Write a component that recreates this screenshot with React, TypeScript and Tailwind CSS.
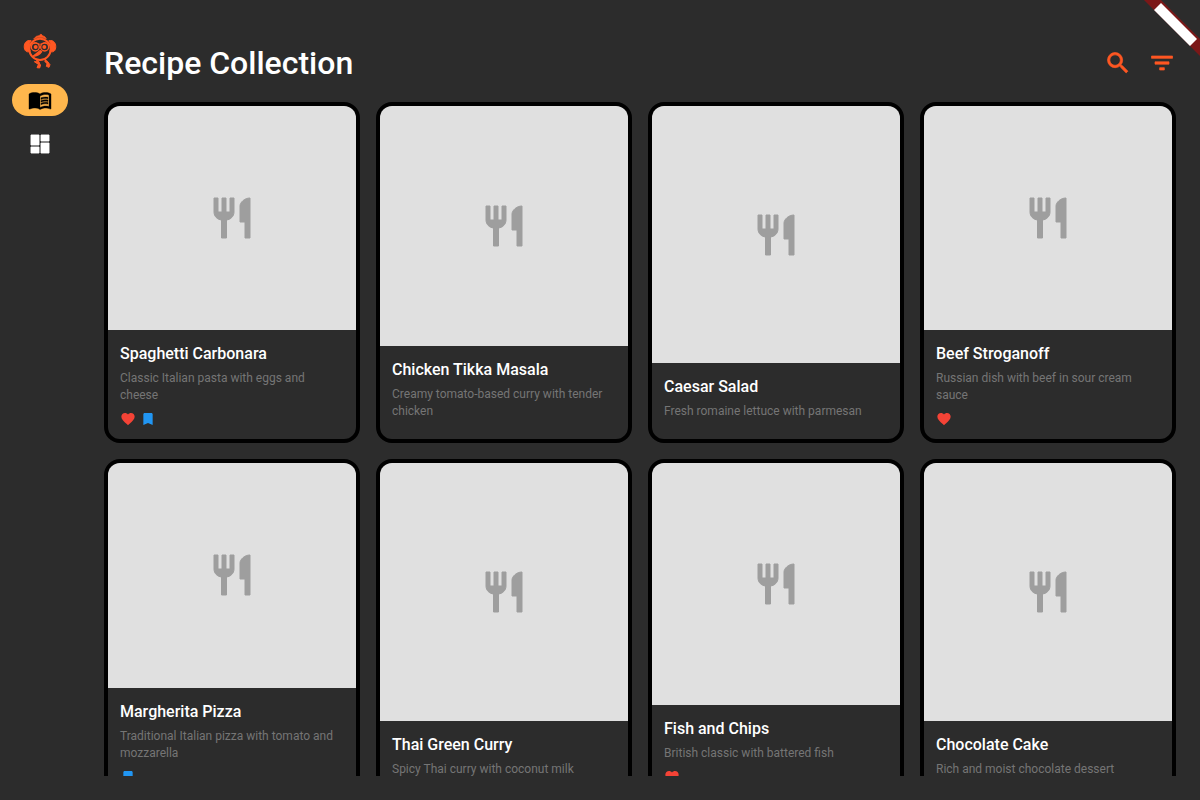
import type { ReactNode } from 'react';
import {
  MdBookmark,
  MdDashboard,
  MdFavorite,
  MdFilterList,
  MdMenuBook,
  MdRestaurant,
  MdSearch,
} from 'react-icons/md';

type Recipe = {
  title: string;
  description: string;
  favorite?: boolean;
  saved?: boolean;
};

const recipes: Recipe[] = [
  { title: 'Spaghetti Carbonara', description: 'Classic Italian pasta with eggs and cheese', favorite: true, saved: true },
  { title: 'Chicken Tikka Masala', description: 'Creamy tomato-based curry with tender chicken' },
  { title: 'Caesar Salad', description: 'Fresh romaine lettuce with parmesan' },
  { title: 'Beef Stroganoff', description: 'Russian dish with beef in sour cream sauce', favorite: true },
  { title: 'Margherita Pizza', description: 'Traditional Italian pizza with tomato and mozzarella', saved: true },
  { title: 'Thai Green Curry', description: 'Spicy Thai curry with coconut milk' },
  { title: 'Fish and Chips', description: 'British classic with battered fish', favorite: true },
  { title: 'Chocolate Cake', description: 'Rich and moist chocolate dessert' },
];

function Logo() {
  return (
    <svg viewBox="0 0 120 126" className="h-[42px] w-10 text-[#ff5722]" fill="none" stroke="currentColor" strokeLinecap="round" strokeLinejoin="round" aria-hidden="true">
      <circle cx="60" cy="58" r="32" strokeWidth="6" />
      <path d="M42 26 Q48 16 57 17 L63 12 L68 17 Q76 19 79 26 Q60 19 42 26Z" fill="currentColor" strokeWidth="2" />
      <path d="M32 32 C18 28 11 42 13 54 C15 66 24 68 30 63 C25 53 27 43 32 32Z" fill="currentColor" strokeWidth="3" />
      <path d="M88 32 C102 28 109 42 107 54 C105 66 96 68 90 63 C95 53 93 43 88 32Z" fill="currentColor" strokeWidth="3" />
      <path d="M34 40 Q44 34 60 43 Q76 34 86 40" strokeWidth="3" />
      <circle cx="46" cy="51" r="12" strokeWidth="4" />
      <circle cx="74" cy="51" r="12" strokeWidth="4" />
      <circle cx="47" cy="51" r="6" fill="currentColor" stroke="none" />
      <circle cx="73" cy="51" r="6" fill="currentColor" stroke="none" />
      <path d="M60 62 L65 65 Q57 78 39 79 Q49 71 60 62Z" fill="currentColor" strokeWidth="4" />
      <path d="M50 89 L58 100 M75 89 L84 99" strokeWidth="5" />
      <path d="M44 95 L52 95 L62 105 L59 114 L51 113 L55 104Z" fill="currentColor" strokeWidth="3" />
      <path d="M75 94 L82 94 L90 104 L87 112 L79 109 L81 102Z" fill="currentColor" strokeWidth="3" />
    </svg>
  );
}

function IconButton({ label, children }: { label: string; children: ReactNode }) {
  return (
    <button type="button" aria-label={label} className="flex size-7 items-center justify-center text-[#ff5722]">
      {children}
    </button>
  );
}

function RecipeCard({ title, description, favorite, saved }: Recipe) {
  return (
    <li className="aspect-3/4">
      <article className="flex h-full flex-col overflow-hidden rounded-2xl border-4 border-black">
        <div className="flex min-h-0 flex-1 items-center justify-center bg-[#e0e0e0] text-[#9e9e9e]">
          <MdRestaurant className="size-12 [stroke-width:0.5] [&>path[fill=none]]:hidden" />
        </div>
        <div className="flex flex-col p-3">
          <h2 className="text-base leading-[23px] font-medium text-white">{title}</h2>
          <p className="mt-[5px] pr-2 text-xs leading-[17px] text-[#757575]">{description}</p>
          <div className="mt-[7px] flex gap-1">
            {favorite && <MdFavorite className="size-4 text-[#f44336]" />}
            {saved && <MdBookmark className="size-4 text-[#2196f3]" />}
          </div>
        </div>
      </article>
    </li>
  );
}

export default function App() {
  return (
    <div className="relative flex h-screen overflow-hidden bg-[#2c2c2c] font-[Roboto,sans-serif]">
      <nav aria-label="Main" className="flex w-20 shrink-0 flex-col items-center pt-[30px]">
        <Logo />
        <a href="#recipes" aria-label="Recipes" aria-current="page" className="mt-3 flex h-8 w-14 items-center justify-center rounded-full bg-[#ffb74d] text-black">
          <MdMenuBook className="size-6 [stroke-width:0.4] [&>path[fill=none]]:hidden" />
        </a>
        <a href="#dashboard" aria-label="Dashboard" className="mt-3 flex h-8 w-14 items-center justify-center rounded-full text-white">
          <MdDashboard className="size-6 [stroke-width:0.9] [&>path[fill=none]]:hidden" />
        </a>
      </nav>

      <main className="flex min-w-0 flex-1 flex-col p-6">
        <header className="flex h-[78px] shrink-0 items-center justify-between">
          <h1 className="text-[32px] leading-10 font-medium text-white">Recipe Collection</h1>
          <div className="flex gap-4">
            <IconButton label="Search">
              <MdSearch className="size-7 [stroke-width:0.6] [&>path[fill=none]]:hidden" />
            </IconButton>
            <IconButton label="Filter">
              <MdFilterList className="size-7 [stroke-width:0.6] [&>path[fill=none]]:hidden" />
            </IconButton>
          </div>
        </header>
        <ul aria-label="Recipes" className="grid min-h-0 flex-1 grid-cols-4 content-start gap-4 overflow-y-auto [scrollbar-width:none]">
          {recipes.map((recipe) => (
            <RecipeCard key={recipe.title} {...recipe} />
          ))}
        </ul>
      </main>

      <svg viewBox="0 0 60 60" className="pointer-events-none absolute top-0 right-0 size-[60px]" aria-hidden="true">
        <path d="M4 0H21L60 39V56Z" fill="#7b1818" />
        <path d="M21 3L57 39L50 46L14 10Z" fill="#fff" />
      </svg>
    </div>
  );
}
